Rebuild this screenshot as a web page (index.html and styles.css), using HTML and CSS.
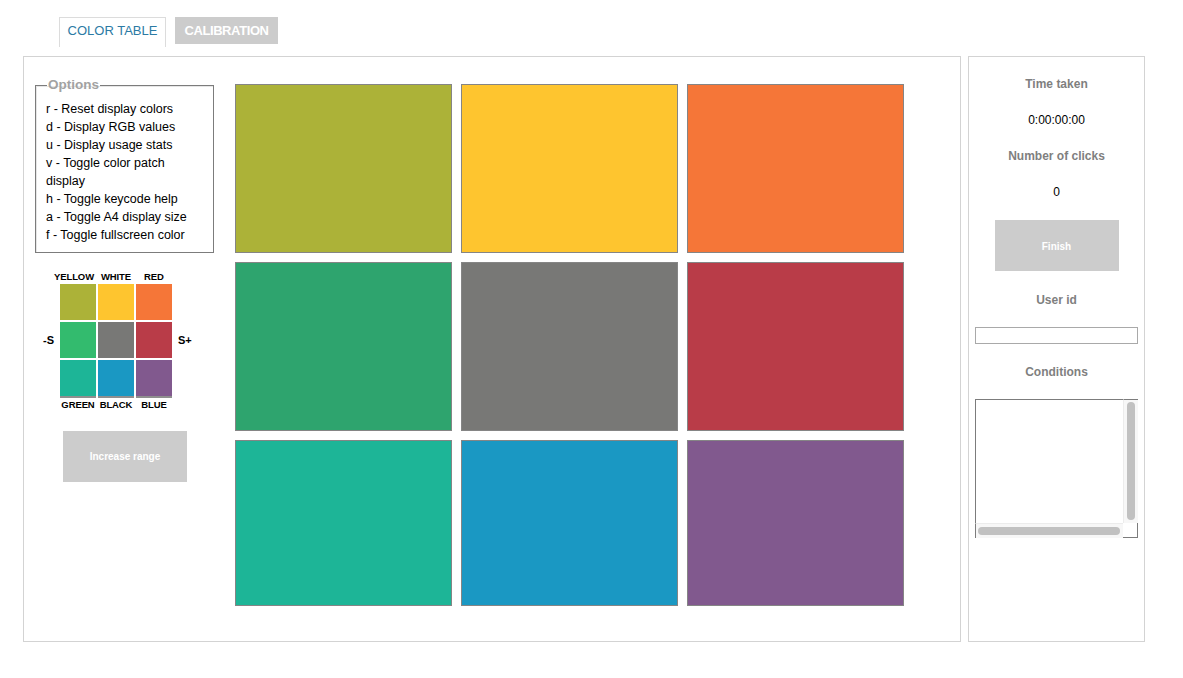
FILE: index.html
```
<!DOCTYPE html>
<html>
<head>
<meta charset="utf-8">
<title>Color Table</title>
<link rel="stylesheet" href="styles.css">
</head>
<body>
<div class="tabs">
  <div class="tab tab-active">COLOR TABLE</div>
  <div class="tab tab-off">CALIBRATION</div>
</div>
<div class="page">
  <div class="main">
    <div class="left">
      <fieldset class="options">
        <legend>Options</legend>
        <div>r - Reset display colors</div>
        <div>d - Display RGB values</div>
        <div>u - Display usage stats</div>
        <div>v - Toggle color patch display</div>
        <div>h - Toggle keycode help</div>
        <div>a - Toggle A4 display size</div>
        <div>f - Toggle fullscreen color</div>
      </fieldset>
      <div class="mini">
        <span></span><span class="lab lab-y">YELLOW</span><span class="lab">WHITE</span><span class="lab">RED</span><span></span>
        <span></span><i class="c-olive"></i><i class="c-yellow"></i><i class="c-orange"></i><span></span>
        <span class="side">-S</span><i class="c-green2"></i><i class="c-gray"></i><i class="c-red"></i><span class="side side-r">S+</span>
        <span></span><i class="c-teal last"></i><i class="c-blue last"></i><i class="c-purple last"></i><span></span>
        <span></span><span class="lab">GREEN</span><span class="lab">BLACK</span><span class="lab">BLUE</span><span></span>
      </div>
      <div class="btn btn-range">Increase range</div>
    </div>
    <div class="patches">
      <div class="patch c-olive"></div>
      <div class="patch c-yellow"></div>
      <div class="patch c-orange"></div>
      <div class="patch c-green"></div>
      <div class="patch c-gray"></div>
      <div class="patch c-red"></div>
      <div class="patch c-teal"></div>
      <div class="patch c-blue"></div>
      <div class="patch c-purple"></div>
    </div>
  </div>
  <div class="side-panel">
    <div class="head">Time taken</div>
    <div class="val">0:00:00:00</div>
    <div class="head">Number of clicks</div>
    <div class="val val-last">0</div>
    <div class="btn btn-finish">Finish</div>
    <div class="head head-user">User id</div>
    <div class="input"></div>
    <div class="head head-cond">Conditions</div>
    <div class="ta">
      <div class="ta-body"></div>
      <div class="ta-vtrack"><div class="ta-vthumb"></div></div>
      <div class="ta-htrack"><div class="ta-hthumb"></div></div>
      <div class="ta-corner"></div>
    </div>
  </div>
</div>
</body>
</html>
```
FILE: styles.css
```
* { box-sizing: border-box; }
html, body { margin: 0; padding: 0; background: #fff; }
body {
  font-family: "Liberation Sans", Arial, Helvetica, sans-serif;
  color: #000;
  width: 1183px;
  height: 678px;
  overflow: hidden;
}
.tabs {
  display: flex;
  gap: 9px;
  padding: 17px 0 0 59px;
  height: 56px;
  align-items: flex-start;
}
.tab {
  font-size: 13px;
  line-height: 27px;
  height: 27px;
  text-align: center;
}
.tab-active {
  width: 107px;
  height: 30px;
  border: 1px solid #dcdcdc;
  border-bottom: none;
  color: #2c7aa4;
  line-height: 26px;
}
.tab-off {
  width: 103px;
  background: #cccccc;
  color: #fff;
  font-weight: bold;
  letter-spacing: -0.4px;
}
.page {
  display: flex;
  gap: 7px;
  padding-left: 23px;
}
.main {
  width: 938px;
  height: 586px;
  border: 1px solid #d3d3d3;
  display: flex;
  padding: 27px 0 0 11px;
  gap: 21px;
}
.left {
  width: 179px;
  display: flex;
  flex-direction: column;
}
.options {
  margin: -6px 0 0 0;
  padding: 8px 8px 7px 10px;
  border: 1px solid #7c7c7c;
  box-shadow: inset 1px 1px 0 #e6e6e6;
  width: 179px;
  height: 175px;
  font-size: 12.5px;
  line-height: 18px;
}
.options legend {
  padding: 0 1px;
  margin-left: 1px;
  color: #a2a2a2;
  font-weight: bold;
  font-size: 13.5px;
  line-height: 14px;
}
.mini {
  margin: 19px 0 0 8px;
  display: grid;
  grid-template-columns: 15px 36px 36px 36px 20px;
  grid-template-rows: 10px 36px 36px 38px 10px;
  gap: 2px;
  align-items: center;
}
.mini i { display: block; width: 36px; height: 100%; }
.mini i.last { border-bottom: 2px solid #8f8f8f; }
.lab {
  font-size: 9.5px;
  font-weight: bold;
  text-align: center;
  line-height: 10px;
  white-space: nowrap;
  letter-spacing: -0.1px;
}
.lab-y { margin-left: -8px; }
.side { font-size: 11px; font-weight: bold; line-height: 12px; }
.side-r { padding-left: 4px; }
.btn {
  background: #cccccc;
  color: #fff;
  font-weight: bold;
  font-size: 10px;
  width: 124px;
  height: 51px;
  display: flex;
  align-items: center;
  justify-content: center;
}
.btn-range { margin: 21px 0 0 28px; }
.patches {
  display: grid;
  grid-template-columns: repeat(3, 217px);
  grid-template-rows: 169px 169px 166px;
  gap: 9px;
  align-content: start;
}
.patch { border: 1px solid #858585; }
.c-olive { background: #acb238; }
.c-yellow { background: #fec52f; }
.c-orange { background: #f57638; }
.c-green { background: #2ea46e; }
.c-green2 { background: #33bb6e; }
.c-gray { background: #787876; }
.c-red { background: #b93c48; }
.c-teal { background: #1db597; }
.c-blue { background: #1a98c3; }
.c-purple { background: #81598e; }
.side-panel {
  width: 177px;
  height: 586px;
  border: 1px solid #d3d3d3;
  display: flex;
  flex-direction: column;
  align-items: center;
  padding-top: 18px;
}
.head {
  color: #7f7f7f;
  font-weight: bold;
  font-size: 12px;
  line-height: 18px;
  height: 18px;
  margin-bottom: 18px;
}
.val {
  font-size: 12px;
  line-height: 18px;
  height: 18px;
  margin-bottom: 18px;
}
.val-last { margin-bottom: 19px; }
.btn-finish { margin-bottom: 19px; padding-top: 1px; }
.head-user { margin-bottom: 19px; padding-top: 1px; }
.input {
  width: 163px;
  height: 17px;
  border: 1px solid #a9a9a9;
  margin-bottom: 18px;
}
.head-cond { margin-bottom: 19px; padding-top: 1px; }
.ta {
  width: 163px;
  height: 139px;
  display: grid;
  grid-template-columns: 148px 15px;
  grid-template-rows: 124px 15px;
}
.ta-body {
  border-left: 1px solid #7c7c7c;
  border-top: 1px solid #7c7c7c;
  background: #fff;
}
.ta-vtrack {
  background: #f7f7f7;
  border-top: 1px solid #7c7c7c;
  border-left: 1px solid #ececec;
  padding: 2px 3px 3px 3px;
}
.ta-vthumb { background: #c1c1c1; border-radius: 4px; height: 100%; }
.ta-htrack {
  background: #f7f7f7;
  border-left: 1px solid #7c7c7c;
  border-top: 1px solid #ececec;
  padding: 3px 3px 3px 2px;
}
.ta-hthumb { background: #c1c1c1; border-radius: 4px; height: 100%; }
.ta-corner {
  background: #fff;
  border-right: 1px solid #7c7c7c;
  border-bottom: 1px solid #7c7c7c;
}
```
